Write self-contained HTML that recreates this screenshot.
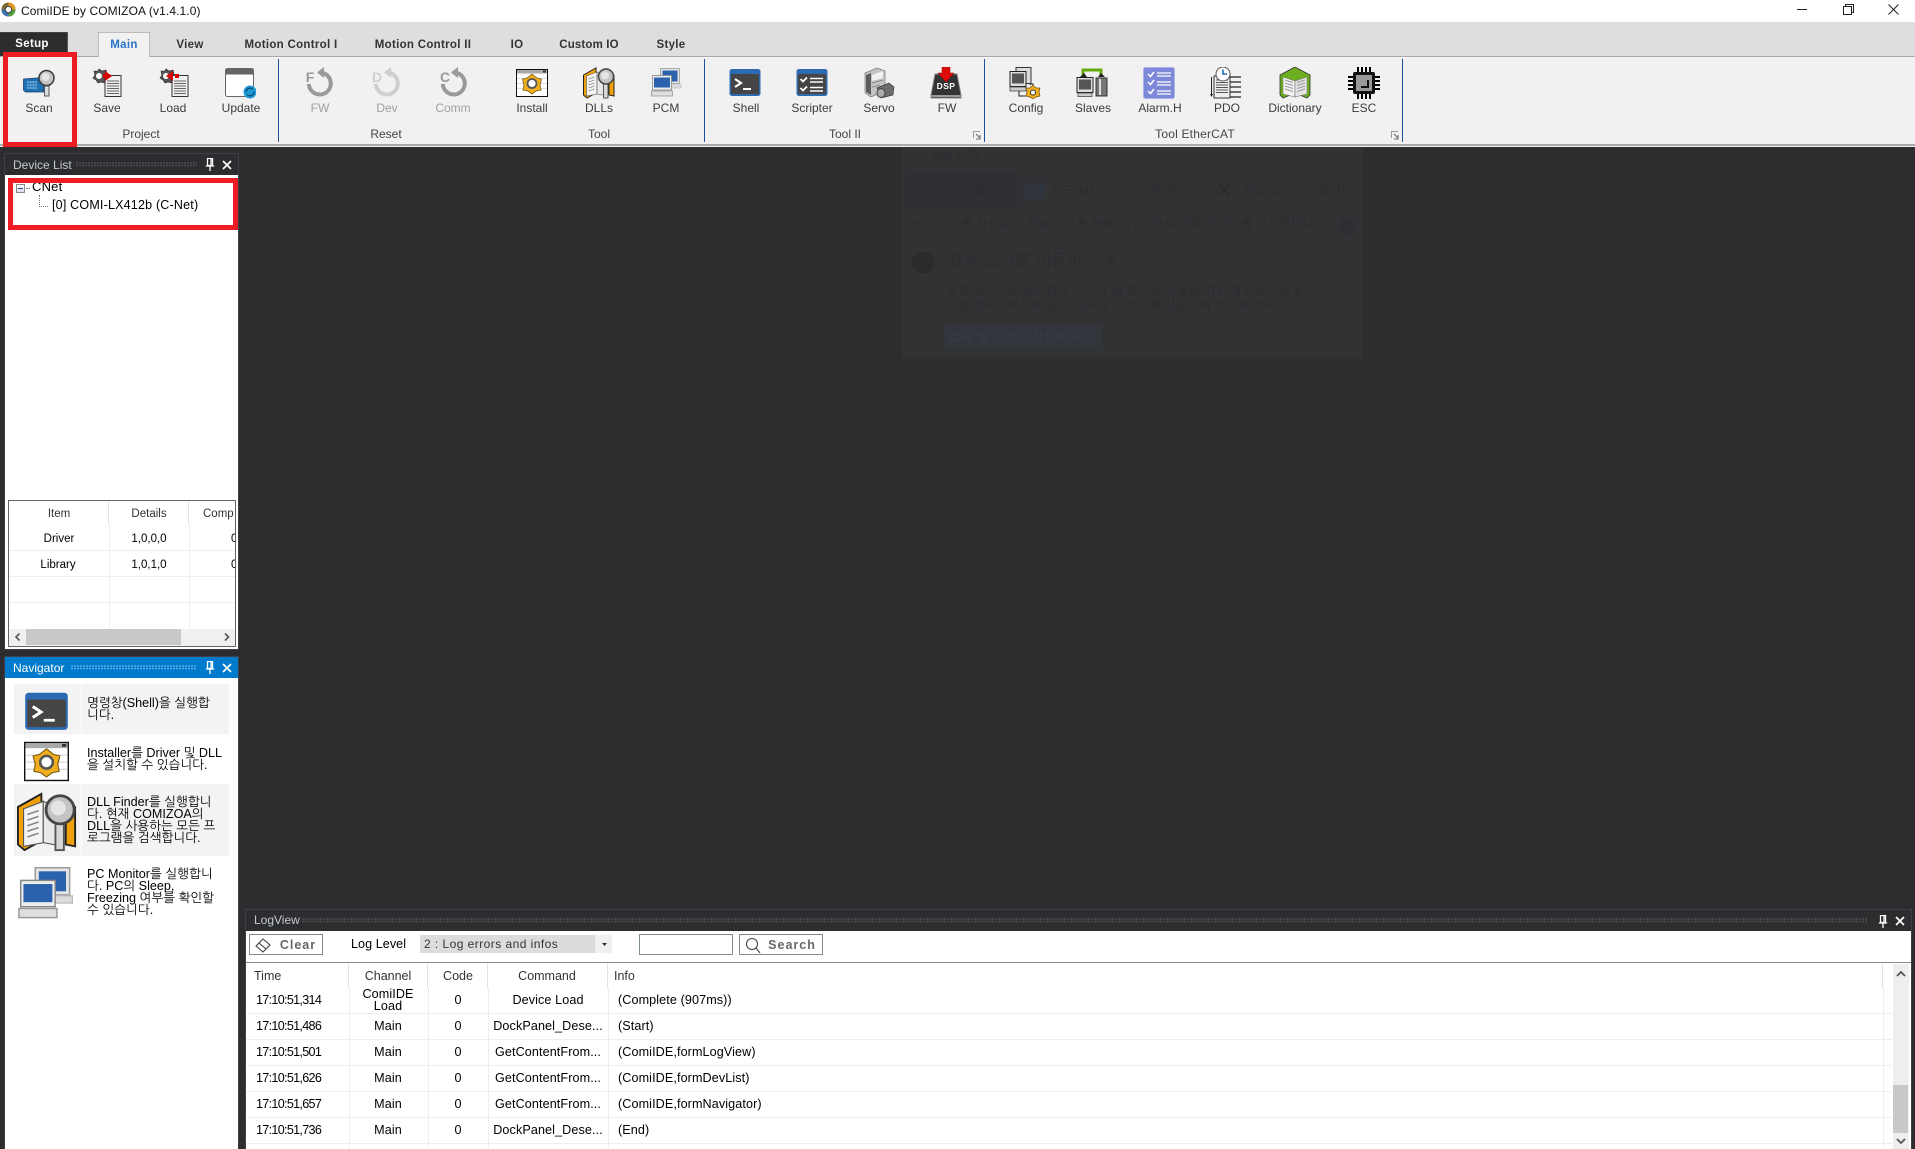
<!DOCTYPE html>
<html lang="ko"><head><meta charset="utf-8"><title>ComiIDE by COMIZOA (v1.4.1.0)</title>
<style>
html,body{margin:0;padding:0;width:1915px;height:1149px;overflow:hidden;background:#2d2d30}
body{position:relative;font-family:"Liberation Sans","NanumGothic","Noto Sans CJK KR",sans-serif;font-size:12px;color:#000}
.b{position:absolute;box-sizing:border-box}
.c,.l{position:absolute;white-space:nowrap;line-height:14px;margin-top:1px}
.c{transform:translate(-50%,-50%)}
.l{transform:translateY(-50%)}
.tab{font-weight:bold;color:#333;font-size:11.5px;letter-spacing:.3px}
.lb{color:#3c3c3c;font-size:12px}
.gr{color:#a0a0a0}
.g{color:#444;font-size:12px}
svg.i{position:absolute;width:32px;height:32px;overflow:visible}
.sep{position:absolute;top:59px;width:1px;height:83px;background:#1f4f9f}
.dots{position:absolute;height:5px;background-image:radial-gradient(circle at 1px 1px,#55555a 0.7px,transparent 1px);background-size:3px 2.5px}
.ttl{position:absolute;font-size:12px;color:#c8d2d8;transform:translateY(-50%);white-space:nowrap}
.nv{position:absolute;left:87px;font-size:12.6px;line-height:12px;color:#000;white-space:nowrap}
.t{font-size:11.5px;color:#000}
.r{font-size:12.6px;color:#000;letter-spacing:.1px}
.tm{letter-spacing:-.7px;font-size:12.6px}
.h{font-size:11.5px;color:#333}
.h2{font-size:12.5px;color:#333}
.gh{color:#2c2c2f;font-size:12.5px;letter-spacing:.3px}
</style></head><body>
<svg width="0" height="0" style="position:absolute">
<defs>
<symbol id="shell" viewBox="0 0 32 32"><rect x="0.5" y="2" width="31" height="27" rx="2.5" fill="#2c6bb3"/><rect x="2" y="7" width="28" height="20" fill="#454545"/><path d="M6 12l6 4-6 4" fill="none" stroke="#fff" stroke-width="2.2"/><rect x="14" y="21" width="8" height="2" fill="#fff"/></symbol>
<symbol id="script" viewBox="0 0 32 32"><rect x="0.5" y="2" width="31" height="27" rx="2.5" fill="#2c6bb3"/><rect x="2" y="7" width="28" height="20" fill="#454545"/><path d="M4.5 12l2.5 2.5 4-4M4.5 21l2.5 2.5 4-4" fill="none" stroke="#fff" stroke-width="1.8"/><path d="M14 11.5h13M14 15h13M14 20.5h13M14 24h13" stroke="#fff" stroke-width="1.4"/></symbol>
<symbol id="install" viewBox="0 0 32 32"><rect x="0.5" y="2.5" width="31" height="27" fill="#fff" stroke="#111"/><rect x="1" y="3" width="30" height="3.5" fill="#aaa"/><rect x="27" y="3.5" width="3" height="2" fill="#333"/><path d="M1 11.5h30M1 16.5h30M1 21.5h30" stroke="#ddd"/><path d="M16 7l5 4 4.5 1-1.5 6 1 5-5 1-4 3-4-3-5-1 1-5-1.500-6 4.500-1z" fill="#f2ae1c" stroke="#7a5a10" stroke-width=".8"/><circle cx="16" cy="16.500" r="4.500" fill="#fff" stroke="#555" stroke-width="1.800"/></symbol>
<symbol id="dll" viewBox="0 0 32 32"><path d="M.5 8L13 1v25L4 31 .5 28z" fill="#f0a008" stroke="#222"/><path d="M31 8l-5-3v23l5 1z" fill="#f0a008" stroke="#222"/><path d="M3.500 9L14 5v22L3.500 29z" fill="#f4f4f4" stroke="#555" stroke-width=".6"/><path d="M14 5l11 4v20l-11-2z" fill="#e8e8e8" stroke="#555" stroke-width=".6"/><path d="M5.500 12l6-2M5.500 15l6-2M5.500 18l6-2M5.500 21l6-2M5.500 24l6-2" stroke="#888" stroke-width=".9"/><rect x="20.500" y="17" width="4.500" height="14" fill="#d8d8d8" stroke="#555"/><circle cx="23" cy="9.500" r="7.500" fill="#c4c4c4" stroke="#444" stroke-width="1.500"/><circle cx="22" cy="8.500" r="4" fill="#eee" opacity=".8"/></symbol>
<symbol id="pcm" viewBox="0 0 32 32"><rect x="9.500" y="1.500" width="19" height="15" fill="#e4e4e4" stroke="#999" stroke-width=".8"/><rect x="11.500" y="3.500" width="15" height="11" fill="#2a62ad"/><rect x="15" y="17" width="15" height="4" fill="#dcdcdc" stroke="#bbb" stroke-width=".7"/><rect x="1.500" y="8.500" width="19" height="14.500" fill="#eee" stroke="#888" stroke-width=".8"/><rect x="3" y="10.500" width="16" height="10" fill="#2a62ad"/><rect x=".5" y="24" width="21" height="5" fill="#dfdfdf" stroke="#999" stroke-width=".8"/></symbol>
<symbol id="scan" viewBox="0 0 32 32"><path d="M.5 11l20-1.500V24H2.500L.5 22z" fill="#1f6fb3" stroke="#17406e" stroke-width=".8"/><path d="M4 13h10v8H4z" fill="#6fa9d8"/><path d="M6 13v8M9 13v8M12 13v8M4 15.500h10M4 18.500h10" stroke="#1f6fb3" stroke-width=".8"/><rect x="21.500" y="18" width="4.500" height="10" fill="#dedede" stroke="#555"/><circle cx="23.500" cy="10" r="7.500" fill="#c4c4c4" stroke="#3c3c3c" stroke-width="1.500"/><circle cx="22.500" cy="9" r="4" fill="#eee" opacity=".8"/></symbol>
<symbol id="save" viewBox="0 0 32 32"><path d="M9 2l3 2 4-1 1 4 2 3-3 3-1 3-4-1-3 1-2-3-3-2 2-3-1-4 4 0z" fill="#555" stroke="#222" stroke-width=".6"/><circle cx="9" cy="9" r="3" fill="#fff"/><rect x="15" y="8.500" width="16" height="21" fill="#f0f0f0" stroke="#333"/><path d="M17 14h12M17 16.500h12M17 19h12M17 21.500h12M17 24h12M17 26.500h12" stroke="#666"/><path d="M15 4l7 5-7 5zM13 7h3v4h-3z" fill="#d90000"/></symbol>
<symbol id="load" viewBox="0 0 32 32"><path d="M9 2l3 2 4-1 1 4 2 3-3 3-1 3-4-1-3 1-2-3-3-2 2-3-1-4 4 0z" fill="#555" stroke="#222" stroke-width=".6"/><circle cx="9" cy="9" r="3" fill="#fff"/><rect x="15" y="8.500" width="16" height="21" fill="#f0f0f0" stroke="#333"/><path d="M17 14h12M17 16.500h12M17 19h12M17 21.500h12M17 24h12M17 26.500h12" stroke="#666"/><path d="M16 4l-7 5 7 5zM18 7h4v4h-4z" fill="#d90000"/></symbol>
<symbol id="update" viewBox="0 0 32 32"><rect x="1.500" y="1.500" width="28" height="28" rx="2" fill="#fff" stroke="#666"/><rect x="1.500" y="1.500" width="28" height="6" fill="#666"/><circle cx="26" cy="25" r="6.500" fill="#1b9ad6"/><path d="M22 25a4 4 0 0 1 7-2.500M30 25a4 4 0 0 1-7 2.500" fill="none" stroke="#0a4a70" stroke-width="1.300"/></symbol>
<symbol id="reset" viewBox="0 0 32 32"><path d="M14 6.500A11 11 0 1 1 3.800 18" fill="none" stroke="#9a9a9a" stroke-width="4"/><path d="M12 6.500L19 1v11z" fill="#9a9a9a"/></symbol>
<symbol id="reset2" viewBox="0 0 32 32"><path d="M14 6.500A11 11 0 1 1 3.800 18" fill="none" stroke="#cfcfcf" stroke-width="4"/><path d="M12 6.500L19 1v11z" fill="#cfcfcf"/></symbol>
<symbol id="servo" viewBox="0 0 32 32"><path d="M2 6l12-5 8 3v20L8 30l-6-4z" fill="#c4c4c4" stroke="#777" stroke-width=".7"/><path d="M3 8l5-2v22l-5-3z" fill="#5c5c5c"/><path d="M9 8l11-4v7l-11 3z" fill="#f0f0f0"/><path d="M9 16l11-3M9 20l8-2" stroke="#888"/><path d="M14 21l12-5 5 4-1 8-12 3z" fill="#6c6c6c" stroke="#3c3c3c" stroke-width=".7"/><ellipse cx="18" cy="26" rx="4" ry="4.500" fill="#aaa" stroke="#444"/></symbol>
<symbol id="dsp" viewBox="0 0 32 32"><path d="M5 7h22l4 21v3H1v-3z" fill="#333" stroke="#888"/><path d="M1.500 29h29" stroke="#bbb" stroke-width="1.500"/><path d="M12 0h8v6h4l-8 9-8-9h4z" fill="#e00b0b" stroke="#8e0000" stroke-width=".5"/></symbol>
<symbol id="config" viewBox="0 0 32 32"><rect x="7" y="0.500" width="15" height="16" fill="#ddd" stroke="#333"/><rect x="1" y="4.500" width="16" height="15" fill="#ddd" stroke="#222"/><rect x="3" y="6.500" width="12" height="10" fill="#555"/><rect x="1" y="20" width="16" height="4" fill="#ccc" stroke="#333" stroke-width=".7"/><path d="M10 24v5h7M20 17h4v6" fill="none" stroke="#222"/><path d="M24 18l3 3 4 0-1 4 1 4-4 1-3 2-3-2-4-1 1-4-1-4 4 0z" fill="#f2ae1c" stroke="#6b4f0e" stroke-width=".7"/><circle cx="24" cy="25.500" r="2.500" fill="#fff" stroke="#333"/></symbol>
<symbol id="slaves" viewBox="0 0 32 32"><path d="M7 9V3h18v6" fill="none" stroke="#63a90f" stroke-width="3"/><path d="M4 10l4-4 3 4zM22 10l3-4 4 4z" fill="#222"/><rect x="1" y="10.500" width="16" height="15" fill="#ddd" stroke="#222"/><rect x="3" y="12.500" width="12" height="10" fill="#555"/><rect x="2" y="26" width="14" height="3.500" fill="#ccc" stroke="#333" stroke-width=".7"/><rect x="20" y="11" width="11" height="18" fill="#777" stroke="#333"/><path d="M24 12v16" stroke="#ddd" stroke-width="2"/></symbol>
<symbol id="alarm" viewBox="0 0 32 32"><rect x="0.500" y="0.500" width="31" height="31" rx="2" fill="#7e88d8" stroke="#aab0e8"/><path d="M5 7l2.500 2.500L11 5M5 15l2.500 2.500L11 13M5 24l2.500 2.500L11 22" fill="none" stroke="#fff" stroke-width="1.500"/><path d="M14 6h14M14 9h14M14 15h14M14 18h14M14 24h14M14 27h14" stroke="#fff" stroke-width="1.200"/></symbol>
<symbol id="pdo" viewBox="0 0 32 32"><rect x="4" y="9" width="16" height="22" fill="#eee" stroke="#333"/><path d="M6 13h12M6 15.500h12M6 18h12M6 20.500h12M6 23h12M6 25.500h12" stroke="#555"/><circle cx="13" cy="7" r="7" fill="#fff" stroke="#555"/><path d="M13 2.500V7h4" fill="none" stroke="#1f6fb3" stroke-width="1.600"/><path d="M20 10h11M20 15h11M20 20h11M20 25h11M20 30h11" stroke="#222" stroke-width="1.200"/><path d="M1.500 10v19" stroke="#222"/><path d="M0 27h3l-1.500 3z" fill="#222"/></symbol>
<symbol id="dict" viewBox="0 0 32 32"><path d="M1 8L16 0l15 8v20l-3 3-12-5-12 5-3-3z" fill="#6cae20" stroke="#333" stroke-width=".8"/><path d="M4 10l12 4v16L4 27z" fill="#f2f2f2" stroke="#777" stroke-width=".6"/><path d="M28 10l-12 4v16l12-3z" fill="#e4e4e4" stroke="#777" stroke-width=".6"/><path d="M6 13l8 2.500M6 16l8 2.500M6 19l8 2.500M6 22l8 2.500M26 13l-8 2.500M26 16l-8 2.500M26 19l-8 2.500M26 22l-8 2.500" stroke="#999"/></symbol>
<symbol id="esc" viewBox="0 0 32 32"><path d="M10 0v32M14 0v32M18 0v32M22 0v32M0 10h32M0 14h32M0 18h32M0 22h32" stroke="#000" stroke-width="2"/><rect x="5" y="5" width="22" height="22" rx="2" fill="#111"/><rect x="8" y="8" width="16" height="16" fill="#999"/><path d="M20 13v7h-7" fill="none" stroke="#111" stroke-width="2"/></symbol>
<symbol id="pin" viewBox="0 0 10 13"><path d="M2.500.5h5v7h-5zM.8 8h8.400M5 8v5M6 1v6" fill="none" stroke="#fff" stroke-width="1.300"/></symbol>
<symbol id="x" viewBox="0 0 10 10"><path d="M1 1l8 8M9 1l-8 8" stroke="#fff" stroke-width="1.700"/></symbol>
</defs></svg>

<!-- title bar -->
<div class="b" style="left:0;top:0;width:1915px;height:22px;background:#fff"></div>
<svg class="i" style="left:1px;top:2px;width:15px;height:15px" viewBox="0 0 15 15"><circle cx="7.500" cy="7.500" r="7" fill="#7d6a2e"/><path d="M7.500 .5a7 7 0 0 1 7 7h-3.500a3.500 3.500 0 0 0-3.500-3.500z" fill="#e39a1d"/><path d="M.5 7.500a7 7 0 0 0 7 7v-3.500a3.500 3.500 0 0 1-3.500-3.500z" fill="#3c70b4"/><path d="M14.500 7.500a7 7 0 0 1-7 7v-3.500a3.500 3.500 0 0 0 3.500-3.500z" fill="#4e9b3f"/><circle cx="7.500" cy="7.500" r="3.200" fill="#fff" stroke="#444"/></svg>
<div class="l" style="left:21px;top:9.500px;font-size:12px;color:#111;letter-spacing:.1px">ComiIDE by COMIZOA (v1.4.1.0)</div>
<svg style="position:absolute;left:1790px;top:0;width:125px;height:22px"><path d="M7 9.500h10" stroke="#222"/><path d="M53.500 6.500h8v8h-8zM55.500 6.500v-2h8v8h-2" fill="none" stroke="#222"/><path d="M98.500 4.500l10 10M108.500 4.500l-10 10" stroke="#222"/></svg>

<!-- ribbon -->
<div class="b" style="left:0;top:22px;width:1915px;height:34px;background:#dedede"></div>
<div class="b" style="left:0;top:56px;width:1915px;height:1px;background:#aaa"></div>
<div class="b" style="left:0;top:57px;width:1915px;height:87px;background:#f1f1f1"></div>
<div class="b" style="left:0;top:144px;width:1915px;height:1.500px;background:#aaa"></div>
<div class="b" style="left:0;top:145.500px;width:1915px;height:1.500px;background:#f1f1f1"></div>
<div class="b" style="left:0;top:32px;width:68px;height:24px;background:#2d2d30;border-top:1px solid #444;border-right:1px solid #555"></div>
<div class="c" style="left:32px;top:43px;color:#fff;font-weight:bold;font-size:11.500px;letter-spacing:.3px">Setup</div>
<div class="b" style="left:98px;top:32px;width:52px;height:25px;background:#f1f1f1;border:1px solid #bbb;border-bottom:none"></div>
<div class="c tab" style="left:124px;top:44px;color:#2a74c8">Main</div>
<div class="c tab" style="left:190px;top:44px">View</div>
<div class="c tab" style="left:291px;top:44px">Motion Control I</div>
<div class="c tab" style="left:423px;top:44px">Motion Control II</div>
<div class="c tab" style="left:517px;top:44px">IO</div>
<div class="c tab" style="left:589px;top:44px;letter-spacing:.15px">Custom IO</div>
<div class="c tab" style="left:671px;top:44px">Style</div>

<div class="sep" style="left:278px"></div><div class="sep" style="left:704px"></div><div class="sep" style="left:984px"></div><div class="sep" style="left:1402px"></div>

<svg class="i" style="left:23px;top:68px"><use href="#scan"/></svg>
<svg class="i" style="left:90px;top:67px"><use href="#save"/></svg>
<svg class="i" style="left:157px;top:67px"><use href="#load"/></svg>
<svg class="i" style="left:224px;top:67px"><use href="#update"/></svg>
<svg class="i" style="left:304.500px;top:66px"><use href="#reset"/></svg>
<div class="c" style="left:310px;top:76px;font-weight:bold;font-size:14px;color:#9a9a9a">F</div>
<svg class="i" style="left:371.500px;top:66px"><use href="#reset2"/></svg>
<div class="c" style="left:377px;top:76px;font-weight:bold;font-size:14px;color:#cfcfcf">D</div>
<svg class="i" style="left:438.500px;top:66px"><use href="#reset"/></svg>
<div class="c" style="left:445px;top:76px;font-weight:bold;font-size:14px;color:#9a9a9a">C</div>
<svg class="i" style="left:516px;top:67px"><use href="#install"/></svg>
<svg class="i" style="left:583px;top:67px"><use href="#dll"/></svg>
<svg class="i" style="left:651px;top:67px"><use href="#pcm"/></svg>
<svg class="i" style="left:729px;top:67px"><use href="#shell"/></svg>
<svg class="i" style="left:796px;top:67px"><use href="#script"/></svg>
<svg class="i" style="left:863px;top:67px"><use href="#servo"/></svg>
<svg class="i" style="left:930px;top:67px"><use href="#dsp"/></svg>
<div class="c" style="left:946px;top:85px;font-weight:bold;font-size:8.500px;color:#fff;letter-spacing:.4px">DSP</div>
<svg class="i" style="left:1009px;top:67px"><use href="#config"/></svg>
<svg class="i" style="left:1076px;top:67px"><use href="#slaves"/></svg>
<svg class="i" style="left:1143px;top:67px"><use href="#alarm"/></svg>
<svg class="i" style="left:1210px;top:67px"><use href="#pdo"/></svg>
<svg class="i" style="left:1279px;top:67px"><use href="#dict"/></svg>
<svg class="i" style="left:1348px;top:67px"><use href="#esc"/></svg>

<div class="c lb" style="left:39px;top:107px">Scan</div>
<div class="c lb" style="left:107px;top:107px">Save</div>
<div class="c lb" style="left:173px;top:107px">Load</div>
<div class="c lb" style="left:241px;top:107px">Update</div>
<div class="c lb gr" style="left:320px;top:107px">FW</div>
<div class="c lb gr" style="left:387px;top:107px">Dev</div>
<div class="c lb gr" style="left:453px;top:107px">Comm</div>
<div class="c lb" style="left:532px;top:107px">Install</div>
<div class="c lb" style="left:599px;top:107px">DLLs</div>
<div class="c lb" style="left:666px;top:107px">PCM</div>
<div class="c lb" style="left:746px;top:107px">Shell</div>
<div class="c lb" style="left:812px;top:107px">Scripter</div>
<div class="c lb" style="left:879px;top:107px">Servo</div>
<div class="c lb" style="left:947px;top:107px">FW</div>
<div class="c lb" style="left:1026px;top:107px">Config</div>
<div class="c lb" style="left:1093px;top:107px">Slaves</div>
<div class="c lb" style="left:1160px;top:107px">Alarm.H</div>
<div class="c lb" style="left:1227px;top:107px">PDO</div>
<div class="c lb" style="left:1295px;top:107px">Dictionary</div>
<div class="c lb" style="left:1364px;top:107px">ESC</div>
<div class="c g" style="left:141px;top:133px">Project</div>
<div class="c g gr" style="left:386px;top:133px">Reset</div>
<div class="c g" style="left:599px;top:133px">Tool</div>
<div class="c g" style="left:845px;top:133px">Tool II</div>
<div class="c g" style="left:1195px;top:133px;letter-spacing:.2px">Tool EtherCAT</div>
<svg style="position:absolute;left:973px;top:131px;width:10px;height:10px"><path d="M.5 7V.5H7" fill="none" stroke="#999"/><path d="M3 3l4 4M7 4v4H3" fill="none" stroke="#666"/></svg>
<svg style="position:absolute;left:1391px;top:131px;width:10px;height:10px"><path d="M.5 7V.5H7" fill="none" stroke="#999"/><path d="M3 3l4 4M7 4v4H3" fill="none" stroke="#666"/></svg>

<!-- ghost window -->
<div class="b" style="left:902px;top:147px;width:461px;height:212px;background:#323235;overflow:hidden"></div>
<div class="l gh" style="left:930px;top:156px;font-size:12px">캡처 도구</div>
<div class="b" style="left:905px;top:173px;width:113px;height:35px;background:#303034"></div>
<div class="l gh" style="left:934px;top:190px">새로 만들기(N)</div>
<div class="b" style="left:1024px;top:183px;width:21px;height:16px;background:#2e333c"></div>
<div class="l gh" style="left:1050px;top:190px">모드(M)</div>
<div class="l gh" style="left:1149px;top:190px">지연(D)</div>
<div class="l" style="left:1216px;top:190px;font-size:20px;color:#2c2c2f">✕</div>
<div class="l gh" style="left:1242px;top:190px">취소(C)</div>
<div class="l gh" style="left:1317px;top:190px">옵션(O)</div>
<div class="l gh" style="left:911px;top:223px;font-size:12px">모드 단추를 사용하여 캡처 모드를 선택하거나 새로 만들기 단추를 클릭합니다.</div>
<div class="b" style="left:1339px;top:218px;width:16px;height:16px;border-radius:8px;background:#2e2e34"></div>
<div class="b" style="left:912px;top:252px;width:23px;height:21px;border-radius:12px;background:#2b2b2e"></div>
<div class="l gh" style="left:948px;top:261px;font-size:16px;letter-spacing:.6px">캡처 도구를 이동하는 중...</div>
<div class="l gh" style="left:946px;top:290px;font-size:12px">향후 업데이트에서 캡처 도구가 새 홈으로 이동합니다. 개선된 기능을</div>
<div class="l gh" style="left:946px;top:304px;font-size:12px">사용해보고 평소와 같이 캡처 및 스케치를 사용하여 캡처하세요.</div>
<div class="b" style="left:944px;top:325px;width:158px;height:25px;background:#32353c"></div>
<div class="c gh" style="left:1022px;top:336px;color:#3a3d44;font-size:12.500px">캡처 및 스케치 사용해 보기</div>

<!-- Device list -->
<div class="b" style="left:4px;top:153px;width:235px;height:497px;border:1px solid #3f3f46;background:#2d2d30"></div>
<div class="ttl" style="left:13px;top:165px;color:#c0ccd0">Device List</div>
<div class="dots" style="left:76px;top:162px;width:121px"></div>
<svg style="position:absolute;left:205px;top:158px;width:10px;height:13px"><use href="#pin"/></svg>
<svg style="position:absolute;left:222px;top:160px;width:10px;height:10px"><use href="#x"/></svg>
<div class="b" style="left:5px;top:175px;width:233px;height:474px;background:#fff"></div>
<div class="b" style="left:16px;top:184px;width:9px;height:9px;border:1px solid #888;background:linear-gradient(#fff,#dde)"></div>
<div class="b" style="left:18px;top:188px;width:5px;height:1px;background:#27408b"></div>
<div class="b" style="left:26px;top:188px;width:4px;border-top:1px dotted #777"></div>
<div class="b" style="left:39px;top:195px;width:9px;height:12px;border-left:1px dotted #777;border-bottom:1px dotted #777"></div>
<div class="l" style="left:32px;top:186px;font-size:13px;letter-spacing:.2px">CNet</div>
<div class="l" style="left:52px;top:204px;font-size:12.500px;letter-spacing:.2px">[0] COMI-LX412b (C-Net)</div>
<!-- red boxes -->
<div class="b" style="left:3px;top:52px;width:74px;height:95px;border:5px solid #ed1c24"></div>
<div class="b" style="left:8px;top:178px;width:230px;height:52px;border:5px solid #ed1c24"></div>

<!-- device grid -->
<div class="b" style="left:8px;top:500px;width:228px;height:147px;border:1px solid #666;overflow:hidden;background:#fff">
 <div class="b" style="left:99px;top:0;width:1px;height:24px;background:#e2e2e2"></div>
 <div class="b" style="left:179px;top:0;width:1px;height:24px;background:#e2e2e2"></div>
 <div class="b" style="left:100px;top:24px;width:1px;height:103px;background:#eee"></div>
 <div class="b" style="left:180px;top:24px;width:1px;height:103px;background:#eee"></div>
 <div class="b" style="left:0;top:49px;width:226px;height:1px;background:#eee"></div>
 <div class="b" style="left:0;top:75px;width:226px;height:1px;background:#eee"></div>
 <div class="b" style="left:0;top:101px;width:226px;height:1px;background:#eee"></div>
 <div class="c h" style="left:50px;top:12px">Item</div>
 <div class="c h" style="left:140px;top:12px">Details</div>
 <div class="l h" style="left:194px;top:12px">Comp</div>
 <div class="c t" style="left:50px;top:37px">Driver</div>
 <div class="c t" style="left:140px;top:37px">1,0,0,0</div>
 <div class="l t" style="left:222px;top:37px">0</div>
 <div class="c t" style="left:49px;top:63px">Library</div>
 <div class="c t" style="left:140px;top:63px">1,0,1,0</div>
 <div class="l t" style="left:222px;top:63px">0</div>
 <div class="b" style="left:0;top:128px;width:226px;height:17px;background:#f0f0f0"></div>
 <div class="b" style="left:17px;top:128px;width:155px;height:16px;background:#c8c8c8"></div>
 <svg style="position:absolute;left:4px;top:131px;width:10px;height:10px"><path d="M6.500 1.500L3 5l3.500 3.500" fill="none" stroke="#555" stroke-width="1.600"/></svg>
 <svg style="position:absolute;left:213px;top:131px;width:10px;height:10px"><path d="M3 1.500L6.500 5 3 8.500" fill="none" stroke="#555" stroke-width="1.600"/></svg>
</div>

<!-- Navigator -->
<div class="b" style="left:4px;top:656px;width:235px;height:493px;border:1px solid #3f3f46;border-bottom:none;background:#fff"></div>
<div class="b" style="left:5px;top:657px;width:233px;height:21px;background:#007acc"></div>
<div class="ttl" style="left:13px;top:668px;color:#fff">Navigator</div>
<div class="dots" style="left:71px;top:665px;width:126px;background-image:radial-gradient(circle at 1px 1px,#6bbbee .7px,transparent 1px)"></div>
<svg style="position:absolute;left:205px;top:661px;width:10px;height:13px"><use href="#pin"/></svg>
<svg style="position:absolute;left:222px;top:663px;width:10px;height:10px"><use href="#x"/></svg>
<div class="b" style="left:14px;top:684px;width:215px;height:50px;background:#f3f3f3"></div>
<div class="b" style="left:14px;top:784px;width:215px;height:72px;background:#f3f3f3"></div>
<div class="b" style="left:81px;top:684px;width:1px;height:50px;background:#fff"></div>
<div class="b" style="left:81px;top:784px;width:1px;height:72px;background:#fff"></div>
<svg class="i" style="left:24px;top:690px;width:45px;height:44px"><use href="#shell"/></svg>
<svg class="i" style="left:24px;top:739px;width:45px;height:45px"><use href="#install"/></svg>
<svg class="i" style="left:17px;top:792px;width:60px;height:60px"><use href="#dll"/></svg>
<svg class="i" style="left:18px;top:865px;width:58px;height:58px"><use href="#pcm"/></svg>
<div class="nv" style="top:697px">명령창(Shell)을 실행합<br>니다.</div>
<div class="nv" style="top:747px">Installer를 Driver 및 DLL<br>을 설치할 수 있습니다.</div>
<div class="nv" style="top:796px">DLL Finder를 실행합니<br>다. 현재 COMIZOA의<br>DLL을 사용하는 모든 프<br>로그램을 검색합니다.</div>
<div class="nv" style="top:868px">PC Monitor를 실행합니<br>다. PC의 Sleep,<br>Freezing 여부를 확인할<br>수 있습니다.</div>

<!-- LogView -->
<div class="b" style="left:245px;top:909px;width:1667px;height:240px;border:1px solid #3f3f46;border-bottom:none;background:#2d2d30"></div>
<div class="ttl" style="left:254px;top:920px;color:#c0ccd0">LogView</div>
<div class="dots" style="left:302px;top:918px;width:1566px"></div>
<svg style="position:absolute;left:1878px;top:915px;width:10px;height:13px"><use href="#pin"/></svg>
<svg style="position:absolute;left:1895px;top:916px;width:10px;height:10px"><use href="#x"/></svg>
<div class="b" style="left:246px;top:931px;width:1665px;height:218px;background:#fff"></div>
<div class="b" style="left:246px;top:962px;width:1665px;height:1px;background:#7f8c8d"></div>
<div class="b" style="left:249px;top:934px;width:74px;height:21px;border:1px solid #7f8c8d"></div>
<svg style="position:absolute;left:254px;top:937px;width:20px;height:16px"><path d="M2 9l7-7 7 6-7 7zM5 6l7 6" fill="none" stroke="#444" stroke-width="1.100"/></svg>
<div class="c" style="left:298px;top:944px;font-weight:bold;color:#666;font-size:12.500px;letter-spacing:1px">Clear</div>
<div class="l r" style="left:351px;top:943px;letter-spacing:.05px">Log Level</div>
<div class="b" style="left:420px;top:935px;width:175px;height:18px;background:#dcdcdc"></div>
<div class="b" style="left:595px;top:935px;width:17px;height:18px;background:#f0f0f0"></div>
<svg style="position:absolute;left:601px;top:942px;width:7px;height:5px"><path d="M1 1h5L3.500 4z" fill="#333"/></svg>
<div class="l" style="left:424px;top:943px;font-size:12px;color:#333;letter-spacing:.45px">2 : Log errors and infos</div>
<div class="b" style="left:639px;top:934px;width:94px;height:21px;border:1px solid #7f8c8d"></div>
<div class="b" style="left:739px;top:934px;width:84px;height:21px;border:1px solid #7f8c8d"></div>
<svg style="position:absolute;left:744px;top:936px;width:18px;height:18px"><circle cx="8" cy="8" r="5.500" fill="none" stroke="#444" stroke-width="1.100"/><path d="M12 12l4 5" stroke="#444" stroke-width="1.100"/></svg>
<div class="c" style="left:792px;top:944px;font-weight:bold;color:#666;font-size:12.500px;letter-spacing:1px">Search</div>

<!-- log table -->
<div class="b" style="left:348px;top:964px;width:1px;height:24px;background:#e2e2e2"></div>
<div class="b" style="left:427px;top:964px;width:1px;height:24px;background:#e2e2e2"></div>
<div class="b" style="left:487px;top:964px;width:1px;height:24px;background:#e2e2e2"></div>
<div class="b" style="left:607px;top:964px;width:1px;height:24px;background:#e2e2e2"></div>
<div class="b" style="left:1882px;top:964px;width:1px;height:24px;background:#e2e2e2"></div>
<div class="b" style="left:349px;top:988px;width:1px;height:161px;background:#eee"></div>
<div class="b" style="left:428px;top:988px;width:1px;height:161px;background:#eee"></div>
<div class="b" style="left:488px;top:988px;width:1px;height:161px;background:#eee"></div>
<div class="b" style="left:608px;top:988px;width:1px;height:161px;background:#eee"></div>
<div class="b" style="left:1883px;top:988px;width:1px;height:161px;background:#eee"></div>
<div class="b" style="left:246px;top:1013px;width:1646px;height:1px;background:#eee"></div>
<div class="b" style="left:246px;top:1039px;width:1646px;height:1px;background:#eee"></div>
<div class="b" style="left:246px;top:1065px;width:1646px;height:1px;background:#eee"></div>
<div class="b" style="left:246px;top:1091px;width:1646px;height:1px;background:#eee"></div>
<div class="b" style="left:246px;top:1117px;width:1646px;height:1px;background:#eee"></div>
<div class="b" style="left:246px;top:1143px;width:1646px;height:1px;background:#eee"></div>
<div class="l h2" style="left:254px;top:975px">Time</div>
<div class="c h2" style="left:388px;top:975px">Channel</div>
<div class="c h2" style="left:458px;top:975px">Code</div>
<div class="c h2" style="left:547px;top:975px">Command</div>
<div class="l h2" style="left:614px;top:975px">Info</div>

<div class="l tm" style="left:256px;top:999px">17:10:51,314</div>
<div class="c r" style="left:388px;top:999px;line-height:12px;text-align:center">ComiIDE<br>Load</div>
<div class="c r" style="left:458px;top:999px">0</div>
<div class="c r" style="left:548px;top:999px">Device Load</div>
<div class="l r" style="left:618px;top:999px">(Complete (907ms))</div>

<div class="l tm" style="left:256px;top:1025px">17:10:51,486</div>
<div class="c r" style="left:388px;top:1025px">Main</div>
<div class="c r" style="left:458px;top:1025px">0</div>
<div class="c r" style="left:548px;top:1025px">DockPanel_Dese...</div>
<div class="l r" style="left:618px;top:1025px">(Start)</div>

<div class="l tm" style="left:256px;top:1051px">17:10:51,501</div>
<div class="c r" style="left:388px;top:1051px">Main</div>
<div class="c r" style="left:458px;top:1051px">0</div>
<div class="c r" style="left:548px;top:1051px">GetContentFrom...</div>
<div class="l r" style="left:618px;top:1051px">(ComiIDE,formLogView)</div>

<div class="l tm" style="left:256px;top:1077px">17:10:51,626</div>
<div class="c r" style="left:388px;top:1077px">Main</div>
<div class="c r" style="left:458px;top:1077px">0</div>
<div class="c r" style="left:548px;top:1077px">GetContentFrom...</div>
<div class="l r" style="left:618px;top:1077px">(ComiIDE,formDevList)</div>

<div class="l tm" style="left:256px;top:1103px">17:10:51,657</div>
<div class="c r" style="left:388px;top:1103px">Main</div>
<div class="c r" style="left:458px;top:1103px">0</div>
<div class="c r" style="left:548px;top:1103px">GetContentFrom...</div>
<div class="l r" style="left:618px;top:1103px">(ComiIDE,formNavigator)</div>

<div class="l tm" style="left:256px;top:1129px">17:10:51,736</div>
<div class="c r" style="left:388px;top:1129px">Main</div>
<div class="c r" style="left:458px;top:1129px">0</div>
<div class="c r" style="left:548px;top:1129px">DockPanel_Dese...</div>
<div class="l r" style="left:618px;top:1129px">(End)</div>

<!-- log scrollbar -->
<div class="b" style="left:1893px;top:964px;width:16px;height:185px;background:#eee"></div>
<div class="b" style="left:1893px;top:1085px;width:15px;height:48px;background:#c8c8c8"></div>
<svg style="position:absolute;left:1895px;top:969px;width:12px;height:10px"><path d="M2 7l4-4 4 4" fill="none" stroke="#555" stroke-width="1.800"/></svg>
<svg style="position:absolute;left:1895px;top:1136px;width:12px;height:10px"><path d="M2 3l4 4 4-4" fill="none" stroke="#555" stroke-width="1.800"/></svg>
</body></html>
